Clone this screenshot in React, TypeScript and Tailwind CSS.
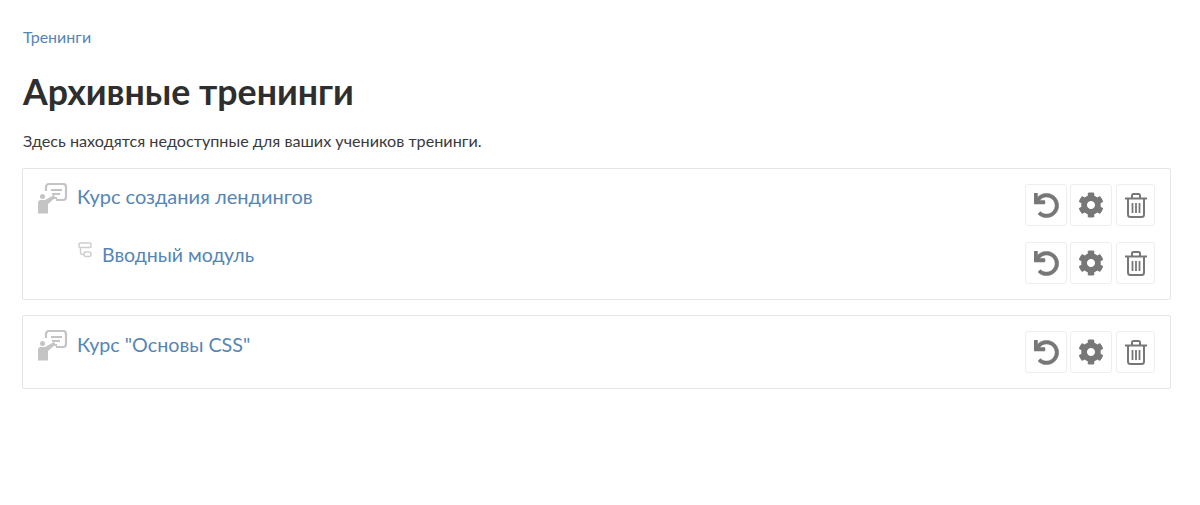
import { FaCog, FaUndo } from "react-icons/fa";

function CourseIcon() {
  return (
    <svg width="30" height="31" viewBox="0 0 30 31" className="-mt-px shrink-0">
      <path d="M8 8V4a3 3 0 0 1 3-3h14a3 3 0 0 1 3 3v10a3 3 0 0 1-3 3h-7" fill="none" stroke="#c4c4c4" strokeWidth="2.200" />
      <path d="M13 7h11M14 11h8M16 15h3" stroke="#c4c4c4" strokeWidth="2" />
      <circle cx="4.500" cy="13.500" r="2.500" fill="#c4c4c4" />
      <path d="M0 20a3 3 0 0 1 3-3h4l9-5 1.500 2.500L10 21v9.500H0z" fill="#c4c4c4" />
    </svg>
  );
}

function ModuleIcon() {
  return (
    <svg width="14" height="16" viewBox="0 0 14 16" className="shrink-0">
      <rect x="1" y="1" width="12" height="4.500" rx="1" fill="none" stroke="#cfcfcf" strokeWidth="1.500" />
      <rect x="6" y="10" width="7" height="4.500" rx="2" fill="none" stroke="#cfcfcf" strokeWidth="1.500" />
      <path d="M2.500 5.500v5a2 2 0 0 0 2 2H6" fill="none" stroke="#cfcfcf" strokeWidth="1.500" />
    </svg>
  );
}

function TrashIcon() {
  return (
    <svg width="22" height="25" viewBox="0 0 22 25" fill="none" stroke="#777777">
      <path d="M0 5.500h22" strokeWidth="2" />
      <path d="M7 5V2.500a1.500 1.500 0 0 1 1.500-1.500h5A1.500 1.500 0 0 1 15 2.500V5" strokeWidth="2" />
      <path d="M3 6v15.500a2.500 2.500 0 0 0 2.500 2.500h11a2.500 2.500 0 0 0 2.500-2.500V6" strokeWidth="2" />
      <path d="M7.500 10v10M11 10v10M14.500 10v10" strokeWidth="1.800" />
    </svg>
  );
}

function Actions() {
  return (
    <div className="flex shrink-0 gap-[3px]">
      <button className="flex h-[42px] w-[42px] items-center justify-center rounded-[3px] border border-[#eeeeee] bg-white">
        <FaUndo size={25} color="#777777" stroke="#777777" strokeWidth={12} />
      </button>
      <button className="flex h-[42px] w-[42px] items-center justify-center rounded-[3px] border border-[#eeeeee] bg-white">
        <FaCog size={26} color="#777777" />
      </button>
      <button className="ml-px flex h-[42px] w-[39px] items-center justify-center rounded-[3px] border border-[#eeeeee] bg-white">
        <TrashIcon />
      </button>
    </div>
  );
}

export default function App() {
  return (
    <div className="h-[505px] bg-white px-[22px] pt-[28px] font-['Lato',sans-serif] text-[#3a3a3a]">
      <a className="ml-px block text-[16px] leading-[18px] text-[#5585b5]">Тренинги</a>
      <h1 className="ml-px mt-[25px] text-[35.700px] font-bold leading-[42px] text-[#2e2e2e]">Архивные тренинги</h1>
      <p className="ml-px mt-[18px] text-[16.200px] leading-[20px]">Здесь находятся недоступные для ваших учеников тренинги.</p>

      <div className="mt-[17px] w-[1149px] rounded-[2px] border border-[#e5e5e5] p-[15px]">
        <div className="flex items-start justify-between">
          <div className="flex items-start gap-[9px]">
            <CourseIcon />
            <a className="text-[20px] leading-[24px] text-[#5585b5]">Курс создания лендингов</a>
          </div>
          <Actions />
        </div>
        <div className="mt-[16px] flex items-start justify-between">
          <div className="ml-[40px] flex items-start gap-[10px]">
            <ModuleIcon />
            <a className="text-[19.500px] leading-[26px] text-[#5585b5]">Вводный модуль</a>
          </div>
          <Actions />
        </div>
      </div>

      <div className="mt-[15px] w-[1149px] rounded-[2px] border border-[#e5e5e5] p-[15px]">
        <div className="flex items-start justify-between">
          <div className="flex items-start gap-[9px]">
            <CourseIcon />
            <a className="text-[19.700px] leading-[28px] text-[#5585b5]">Курс "Основы CSS"</a>
          </div>
          <Actions />
        </div>
      </div>
    </div>
  );
}
